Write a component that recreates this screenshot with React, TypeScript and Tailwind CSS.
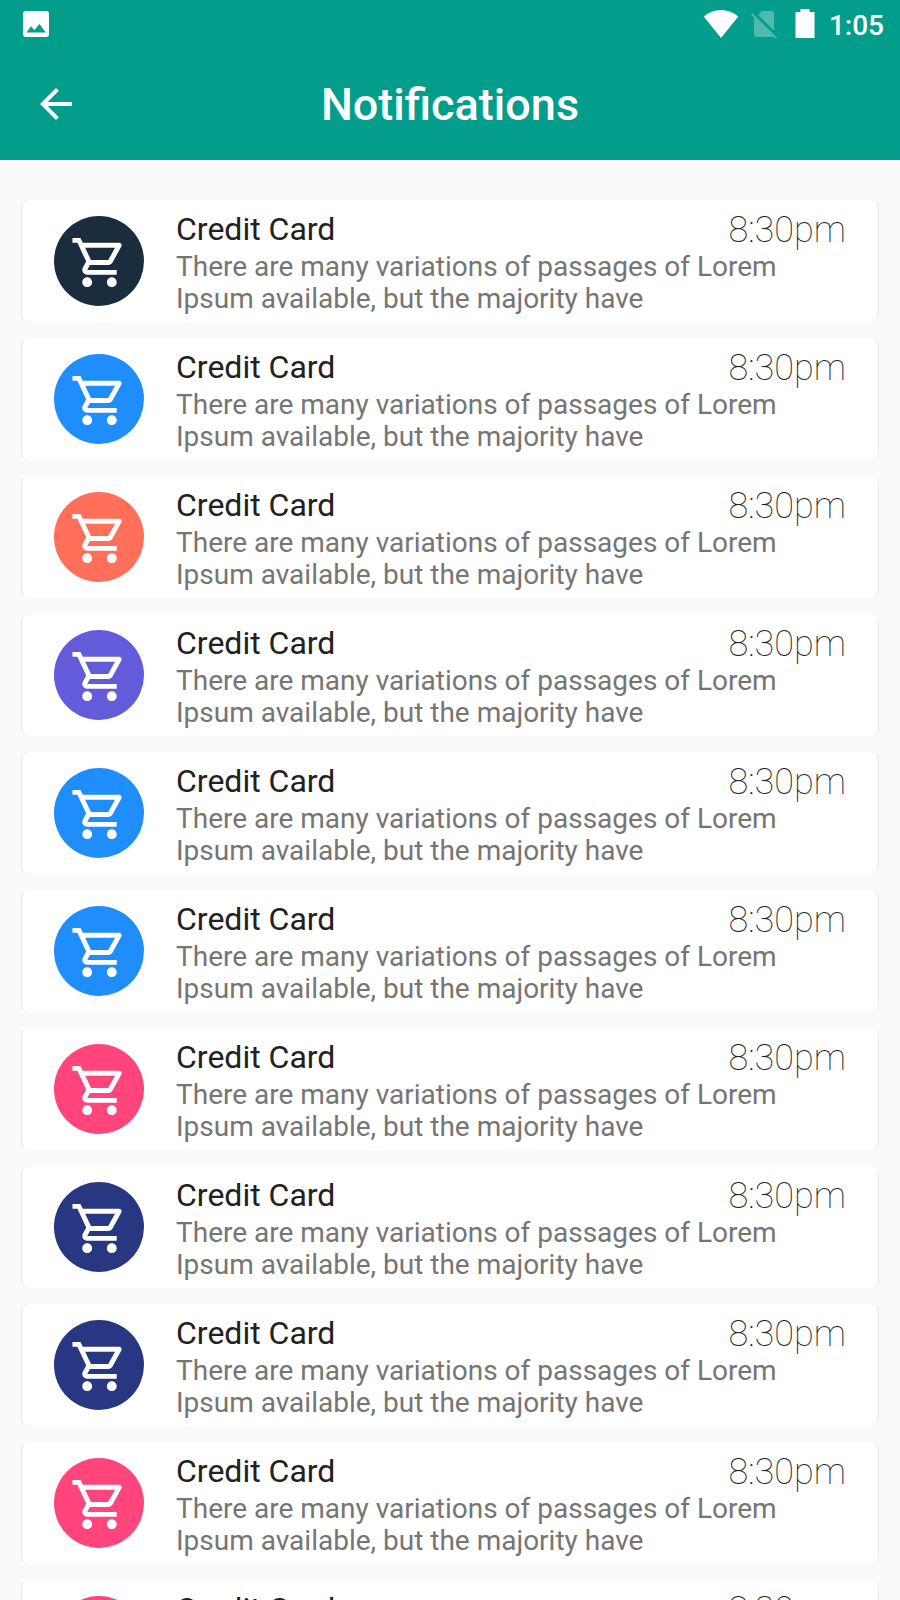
import React from "react";
import { MdOutlineShoppingCart } from "react-icons/md";

type Notification = { id: number; title: string; body: string; time: string; color: string };

const colors = [
  "bg-[#192d3e]",
  "bg-[#1f8dfb]",
  "bg-[#ff6f59]",
  "bg-[#635bda]",
  "bg-[#1f8dfb]",
  "bg-[#1f8dfb]",
  "bg-[#ff457c]",
  "bg-[#273781]",
  "bg-[#273781]",
  "bg-[#ff457c]",
  "bg-[#ff457c]",
];

const notifications: Notification[] = colors.map((color, id) => ({
  id,
  title: "Credit Card",
  body: "There are many variations of passages of Lorem Ipsum available, but the majority have",
  time: "8:30pm",
  color,
}));

function StatusBar() {
  return (
    <div className="flex h-12 items-center justify-between pr-4 pl-5">
      <svg viewBox="0 0 32 32" className="size-8" fill="currentColor" aria-hidden="true">
        <path
          fillRule="evenodd"
          d="M6 3h20q3 0 3 3v20q0 3-3 3H6q-3 0-3-3V6q0-3 3-3zM6.500 24.500h19.300L19.400 16l-5 6.300-3.400-4z"
        />
      </svg>
      <div className="flex items-center">
        <svg viewBox="0 0 36 30" className="mr-3 h-[30px] w-9" fill="currentColor" aria-hidden="true">
          <path d="M18 29 .7 7.6C5.6 3.200 11.5 1 18 1s12.400 2.200 17.300 6.600z" />
        </svg>
        <svg viewBox="0 0 28 30" className="mr-4 h-[30px] w-7 opacity-30" aria-hidden="true">
          <path fill="currentColor" d="M7.200 6 11 2h9.500Q23 2 23 4.500v17.300zM3 8 22.500 27.200q-.600.800-2 .8H5.500Q3 28 3 25.500z" />
          <path stroke="currentColor" strokeWidth="1.800" d="M.700 4.900 25.200 29.200" />
        </svg>
        <svg viewBox="0 0 20 30" className="mr-3.5 h-[30px] w-5" fill="currentColor" aria-hidden="true">
          <path d="M5.500 0h9v3H19.500v26H.5V3h5z" />
        </svg>
        <span className="mt-1 text-[28px] leading-8 font-medium">1:05</span>
      </div>
    </div>
  );
}

function NotificationCard({ item }: { item: Notification }) {
  return (
    <li className="flex items-start rounded-lg border-x border-[#e6e6e6] bg-white px-8">
      <span className={`my-4 flex size-[90px] shrink-0 items-center justify-center rounded-full pt-0.5 text-white ${item.color}`}>
        <MdOutlineShoppingCart className="size-[59px]" aria-hidden="true" />
      </span>
      <div className="ml-8 min-w-0 flex-1 pt-3 pb-[7px]">
        <div className="flex items-start justify-between">
          <h2 className="text-[32px] leading-[34px] text-[#212121]">{item.title}</h2>
          <time className="text-[36px] leading-9 font-thin text-[#212121]">{item.time}</time>
        </div>
        <p className="mt-[3px] max-w-[640px] text-[28px] leading-8 text-[#757575]">{item.body}</p>
      </div>
    </li>
  );
}

export default function App() {
  return (
    <div className="min-h-screen bg-[#fafafa] font-[Roboto,sans-serif]">
      <header className="bg-[#039e8b] text-white">
        <StatusBar />
        <div className="grid h-28 grid-cols-[1fr_auto_1fr] items-center px-8">
          <button type="button" aria-label="Back" className="flex size-12 items-center justify-center">
            <svg viewBox="0 0 24 24" className="size-12" fill="currentColor" aria-hidden="true">
              <path d="M20 11H7.830l5.590-5.590L12 4l-8 8 8 8 1.410-1.410L7.830 13H20z" />
            </svg>
          </button>
          <h1 className="pt-0.5 text-[45px] leading-[52px] font-medium">Notifications</h1>
        </div>
      </header>
      <main className="px-[21px] pt-10">
        <ul className="flex flex-col gap-4">
          {notifications.map((item) => (
            <NotificationCard key={item.id} item={item} />
          ))}
        </ul>
      </main>
    </div>
  );
}
